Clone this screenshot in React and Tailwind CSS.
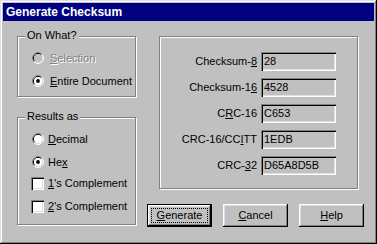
import React from "react";

function Radio({ checked, disabled }) {
  return (
    <svg width="12" height="12" viewBox="0 0 12 12" className="shrink-0">
      <path d="M2.11 9.89 A5.5 5.5 0 0 1 9.89 2.11" stroke="#808080" strokeWidth="1" fill="none" />
      <path d="M9.89 2.11 A5.5 5.5 0 0 1 2.11 9.89" stroke="#ffffff" strokeWidth="1" fill="none" />
      <path d="M2.82 9.18 A4.5 4.5 0 0 1 9.18 2.82" stroke="#000000" strokeWidth="1" fill="none" />
      <path d="M9.18 2.82 A4.5 4.5 0 0 1 2.82 9.18" stroke="#dfdfdf" strokeWidth="1" fill="none" />
      <circle cx="6" cy="6" r="4" fill={disabled ? "#c0c0c0" : "#ffffff"} />
      {checked && <circle cx="6" cy="6" r="1.9" fill="#000000" />}
    </svg>
  );
}

function Check() {
  return (
    <span className="block w-[13px] h-[13px] shrink-0 bg-white shadow-[inset_1px_1px_#808080,inset_2px_2px_#000,inset_-1px_-1px_#fff,inset_-2px_-2px_#dfdfdf]" />
  );
}

function Group({ label, className, children }) {
  return (
    <div
      className={
        "relative border border-[#808080] shadow-[inset_1px_1px_#fff,1px_1px_#fff] " +
        className
      }
    >
      {label && (
        <span className="absolute left-[7px] -top-[8px] px-[2px] bg-[#c0c0c0] leading-[13px]">
          {label}
        </span>
      )}
      {children}
    </div>
  );
}

function Field({ label, value }) {
  return (
    <div className="flex items-center justify-end gap-[4px] h-[19px]">
      <span className="leading-[13px]">{label}</span>
      <div className="w-[75px] h-[19px] bg-[#c0c0c0] pl-[3px] pt-[3px] leading-[13px] shadow-[inset_1px_1px_#808080,inset_2px_2px_#000,inset_-1px_-1px_#fff,inset_-2px_-2px_#dfdfdf]">
        {value}
      </div>
    </div>
  );
}

function Button({ children, isDefault }) {
  if (isDefault) {
    return (
      <button className="relative w-[65px] h-[23px] border border-black bg-[#c0c0c0] shadow-[inset_-1px_-1px_#000,inset_1px_1px_#fff,inset_-2px_-2px_#808080,inset_2px_2px_#dfdfdf] leading-[13px]">
        <span className="absolute inset-[3px] border border-dotted border-black" />
        {children}
      </button>
    );
  }
  return (
    <button className="w-[65px] h-[23px] bg-[#c0c0c0] shadow-[inset_-1px_-1px_#000,inset_1px_1px_#fff,inset_-2px_-2px_#808080,inset_2px_2px_#dfdfdf] leading-[13px]">
      {children}
    </button>
  );
}

export default function App() {
  return (
    <div className="w-[377px] h-[244px] bg-[#c0c0c0] p-[3px] text-[11px] text-black font-['Liberation_Sans',Arial,sans-serif] shadow-[inset_-1px_-1px_#000,inset_1px_1px_#dfdfdf,inset_-2px_-2px_#808080,inset_2px_2px_#fff]">
      {/* title bar */}
      <div className="h-[18px] bg-[#000080] text-white text-[12px] font-bold pl-[3px] flex items-center">
        Generate Checksum
      </div>

      <div className="flex">
        <div className="ml-[14px] mt-[15px] w-[119px]">
          <Group label="On What?" className="w-[119px] h-[61px] pl-[14px] pt-[15px]">
            <div className="flex items-center gap-[6px] h-[12px] text-[#808080] [text-shadow:1px_1px_0_#fff]">
              <Radio disabled />
              <span className="leading-[13px]">
                <u>S</u>election
              </span>
            </div>
            <div className="flex items-center gap-[6px] h-[12px] mt-[11px]">
              <Radio checked />
              <span className="leading-[13px]">
                <u>E</u>ntire Document
              </span>
            </div>
          </Group>

          <Group label="Results as" className="mt-[20px] w-[119px] h-[108px] pl-[14px] pt-[15px]">
            <div className="flex items-center gap-[4px] h-[12px]">
              <Radio />
              <span className="leading-[13px]">
                <u>D</u>ecimal
              </span>
            </div>
            <div className="flex items-center gap-[4px] h-[12px] mt-[11px]">
              <Radio checked />
              <span className="leading-[13px]">
                He<u>x</u>
              </span>
            </div>
            <div className="flex items-center gap-[4px] h-[13px] mt-[9px] -ml-px">
              <Check />
              <span className="leading-[13px]">
                <u>1</u>'s Complement
              </span>
            </div>
            <div className="flex items-center gap-[4px] h-[13px] mt-[10px] -ml-px">
              <Check />
              <span className="leading-[13px]">
                <u>2</u>'s Complement
              </span>
            </div>
          </Group>
        </div>

        <div className="ml-[11px] mt-[15px] w-[218px]">
          <Group className="ml-[12px] w-[199px] h-[153px] pt-[15px] pr-[21px] flex flex-col gap-[7px]">
            <Field label={<>Checksum-<u>8</u></>} value="28" />
            <Field label={<>Checksum-1<u>6</u></>} value="4528" />
            <Field label={<>C<u>R</u>C-16</>} value="C653" />
            <Field label={<>CRC-16/CC<u>I</u>TT</>} value="1EDB" />
            <Field label={<>CRC-<u>3</u>2</>} value="D65A8D5B" />
          </Group>

          <div className="flex gap-[11px] mt-[15px]">
            <Button isDefault>
              <u>G</u>enerate
            </Button>
            <Button>
              <u>C</u>ancel
            </Button>
            <Button>
              <u>H</u>elp
            </Button>
          </div>
        </div>
      </div>
    </div>
  );
}
